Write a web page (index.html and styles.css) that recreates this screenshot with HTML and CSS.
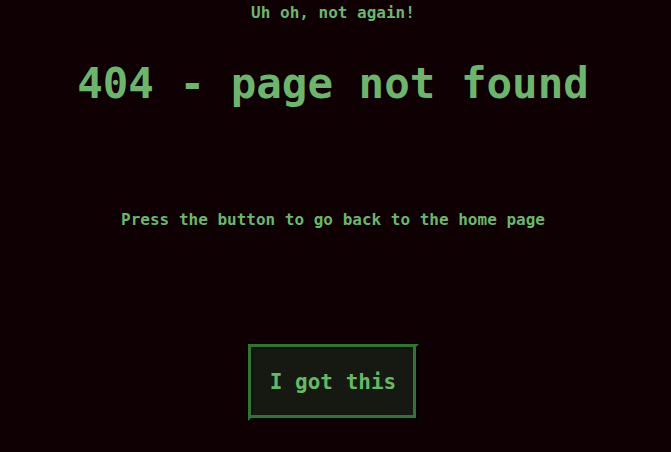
FILE: index.html
```html
<!DOCTYPE html>
<html lang="en">
<head>
<meta charset="utf-8">
<title>404 - page not found</title>
<link rel="stylesheet" href="styles.css">
</head>
<body>
<main class="page">
  <div class="tag">Uh oh, not again!</div>
  <h1 class="title">404 - page not found</h1>
  <p class="hint">Press the button to go back to the home page</p>
  <button class="btn" type="button">I got this</button>
</main>
</body>
</html>
```

FILE: styles.css
```css
html, body {
  margin: 0;
  padding: 0;
  background: #0e0003;
}

.page {
  display: flex;
  flex-direction: column;
  align-items: center;
  text-align: center;
  padding-right: 5px;
  font-family: "DejaVu Sans Mono", "Liberation Mono", monospace;
  font-weight: bold;
  color: #6db56d;
  min-height: 452px;
  box-sizing: border-box;
}

.tag {
  font-size: 16px;
  line-height: 26px;
}

.title {
  margin: 30px 0 0;
  font-size: 42.5px;
  line-height: 56px;
  font-weight: bold;
}

.hint {
  margin: 95px 0 0;
  font-size: 16px;
  line-height: 26px;
}

.btn {
  margin-top: 111px;
  box-sizing: border-box;
  width: 171px;
  height: 77px;
  padding: 0;
  font-family: "DejaVu Sans Mono", "Liberation Mono", monospace;
  font-weight: bold;
  font-size: 21px;
  line-height: 71px;
  color: #66b866;
  background: #161912;
  border: 3px solid;
  border-color: #327236 #020202 #020202 #327236;
  box-shadow: inset -3px -3px 0 #327236, inset 2px 2px 0 #08130a;
  cursor: pointer;
}
```
